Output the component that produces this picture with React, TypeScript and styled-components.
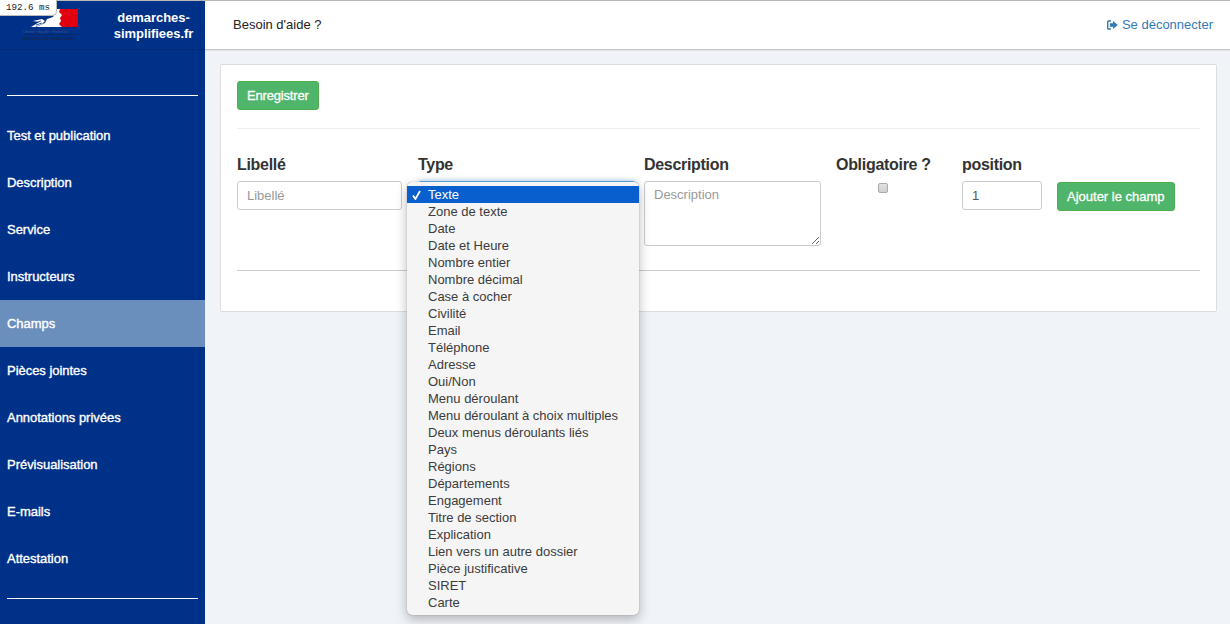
import React from "react";
import styled, { createGlobalStyle } from "styled-components";

const Global = createGlobalStyle`
  html, body { margin: 0; padding: 0; height: 100%; }
  body { background: #f0f3f8; font-family: "Liberation Sans", Arial, sans-serif; color: #333; overflow: hidden; }
  * { box-sizing: border-box; }
`;

const Page = styled.div`
  display: flex;
  width: 1230px;
  height: 624px;
  position: relative;
  overflow: hidden;
`;
const Timer = styled.div`
  position: absolute;
  top: 0;
  left: 0;
  width: 57px;
  height: 16px;
  padding: 3px 0 0 6px;
  background: #fff;
  border-right: 1px solid #bbb;
  border-bottom: 1px solid #bbb;
  border-bottom-right-radius: 5px;
  font: 9.2px/10px "Liberation Mono", monospace;
  color: #222;
  z-index: 5;
`;
const Sidebar = styled.aside`
  width: 205px;
  flex: none;
  background: #003189;
  display: flex;
  flex-direction: column;
`;
const Brand = styled.div`
  height: 50px;
  flex: none;
  display: flex;
  align-items: flex-start;
  border-bottom: 1px solid #002a75;
  border-top: 1px solid #b9b9b9;
`;
const Logo = styled.div`
  width: 110px;
  flex: none;
  padding: 7px 0 0 22px;
`;
const LogoMark = styled.svg`
  display: block;
  width: 57px;
  height: 34px;
`;
const BrandName = styled.div`
  width: 95px;
  padding-top: 9px;
  padding-right: 8px;
  text-align: center;
  font-size: 13px;
  line-height: 16px;
  font-weight: 700;
  letter-spacing: -0.05px;
  color: #fff;
`;
const Rule = styled.hr<{ $top?: number; $bottom?: number }>`
  border: 0;
  height: 1px;
  background: #fff;
  margin: ${(p) => p.$top ?? 0}px 7px ${(p) => p.$bottom ?? 0}px;
  flex: none;
`;
const Nav = styled.nav`
  display: flex;
  flex-direction: column;
`;
const NavItem = styled.a<{ $active?: boolean }>`
  display: flex;
  align-items: center;
  height: 47px;
  padding-left: 7px;
  font-size: 13px;
  letter-spacing: -0.03px;
  -webkit-text-stroke: 0.35px #fff;
  color: #fff;
  background: ${(p) => (p.$active ? "#6a8fbc" : "transparent")};
`;
const Main = styled.main`
  flex: 1;
  min-width: 0;
  display: flex;
  flex-direction: column;
`;
const Header = styled.header`
  height: 50px;
  flex: none;
  background: #fff;
  border-top: 1px solid #b9b9b9;
  border-bottom: 1px solid #c4c6c8;
  box-shadow: 0 1px 1px rgba(0, 0, 0, 0.06);
  display: flex;
  align-items: center;
  justify-content: space-between;
  padding: 0 17px 1px 28px;
  font-size: 13px;
  color: #222;
`;
const Logout = styled.a`
  display: flex;
  align-items: center;
  gap: 4px;
  font-size: 13px;
  color: #337ab7;
`;
const Card = styled.section`
  margin: 14px 13px 0 15px;
  height: 248px;
  background: #fff;
  border: 1px solid #ddd;
  border-radius: 2px;
  padding: 16px 16px 0;
`;
const Button = styled.button<{ $tight?: boolean }>`
  display: block;
  height: 29px;
  padding: 0 9px;
  background: #4fb56a;
  border: 1px solid #4cae4c;
  border-radius: 3px;
  color: #fff;
  font-family: inherit;
  font-size: 13px;
  letter-spacing: ${(p) => (p.$tight ? "-0.18px" : "0")};
  -webkit-text-stroke: 0.3px #fff;
  white-space: nowrap;
`;
const Divider = styled.hr<{ $color: string; $top: number }>`
  border: 0;
  height: 1px;
  margin: ${(p) => p.$top}px 0 0;
  background: ${(p) => p.$color};
`;
const FormRow = styled.div`
  display: flex;
  align-items: flex-start;
  margin-top: 26px;
  height: 115px;
`;
const Field = styled.div<{ $width: number }>`
  position: relative;
  width: ${(p) => p.$width}px;
  flex: none;
`;
const Label = styled.div`
  height: 17px;
  margin-bottom: 9px;
  font-size: 16px;
  line-height: 19px;
  font-weight: 700;
  letter-spacing: -0.3px;
  color: #333;
  white-space: nowrap;
`;
const Input = styled.input<{ $width: number }>`
  display: block;
  width: ${(p) => p.$width}px;
  height: 29px;
  padding: 0 9px;
  background: #fff;
  border: 1px solid #ccc;
  border-radius: 3px;
  font-family: inherit;
  font-size: 13px;
  color: #555;
  &::placeholder { color: #999; opacity: 1; }
`;
const TextArea = styled.textarea`
  display: block;
  width: 177px;
  height: 65px;
  padding: 5px 9px;
  border: 1px solid #ccc;
  border-radius: 3px;
  font-family: inherit;
  font-size: 13px;
  &::placeholder { color: #999; opacity: 1; }
`;
const Check = styled.input`
  appearance: none;
  display: block;
  width: 10px;
  height: 10px;
  margin: 11px 0 0 42px;
  background: linear-gradient(#e2e2e2, #cfcfcf);
  border: 1px solid #aaa;
  border-radius: 2px;
`;
const SelectBack = styled.div`
  width: 218px;
  height: 29px;
  border: 1px solid #66afe9;
  border-radius: 3px;
  box-shadow: 0 0 5px rgba(102, 175, 233, 0.6);
`;
const Menu = styled.ul`
  position: absolute;
  left: -11px;
  top: 27px;
  width: 232px;
  margin: 0;
  padding: 4px 0 4px;
  list-style: none;
  background: #f5f5f5;
  border-radius: 5px;
  box-shadow: 0 0 1px rgba(0, 0, 0, 0.45), 0 4px 12px rgba(0, 0, 0, 0.28);
  z-index: 3;
`;
const MenuItem = styled.li<{ $selected?: boolean }>`
  position: relative;
  height: 17px;
  padding-left: 21px;
  font-size: 13px;
  line-height: 17px;
  white-space: nowrap;
  color: ${(p) => (p.$selected ? "#fff" : "#3c3c3c")};
  background: ${(p) => (p.$selected ? "#0a5fce" : "transparent")};
`;
const Tick = styled.svg`
  position: absolute;
  left: 5px;
  top: 4px;
  width: 9px;
  height: 10px;
`;
const ButtonCell = styled.div`
  padding-top: 27px;
`;

const nav = ["Test et publication", "Description", "Service", "Instructeurs", "Champs", "Pièces jointes", "Annotations privées", "Prévisualisation", "E-mails", "Attestation"];
const types = ["Texte", "Zone de texte", "Date", "Date et Heure", "Nombre entier", "Nombre décimal", "Case à cocher", "Civilité", "Email", "Téléphone", "Adresse", "Oui/Non", "Menu déroulant", "Menu déroulant à choix multiples", "Deux menus déroulants liés", "Pays", "Régions", "Départements", "Engagement", "Titre de section", "Explication", "Lien vers un autre dossier", "Pièce justificative", "SIRET", "Carte"];

export default function App() {
  return (
    <Page>
      <Global />
      <Timer>192.6 ms</Timer>
      <Sidebar>
        <Brand>
          <Logo>
            <LogoMark viewBox="0 0 57 34">
              <rect x="35" y="1" width="21" height="18" fill="#e1000f" />
              <path d="M35 1 L38 1 L37 4 L40 7 L38 10 L39 13 L37 16 L40 19 L14 19 L23 15 L25 11 L31 9 L33 5 Z" fill="#fff" />
              <path d="M11 13 L20 11 L23 13 L20 16 L13 19 L9 19 L14 16 L17 14 Z" fill="#fff" />
              <path d="M13 15 L19 13 M14 17 L20 15" stroke="#003189" strokeWidth="0.8" />
              <rect x="1" y="26" width="55" height="0.7" fill="#14264f" />
              <text x="1" y="24.5" fontSize="3.7" fill="#3c5288" fontFamily="Liberation Sans">Liberté • Égalité • Fraternité</text>
              <text x="1" y="32" fontSize="4" fontWeight="700" fill="#14264f" fontFamily="Liberation Sans">RÉPUBLIQUE FRANÇAISE</text>
            </LogoMark>
          </Logo>
          <BrandName>demarches-<br />simplifiees.fr</BrandName>
        </Brand>
        <Rule $top={45} $bottom={16} />
        <Nav>
          {nav.map((n) => (
            <NavItem key={n} $active={n === "Champs"}>{n}</NavItem>
          ))}
        </Nav>
        <Rule $top={16} />
      </Sidebar>
      <Main>
        <Header>
          <span>Besoin d'aide ?</span>
          <Logout>
            <svg width="11" height="10" viewBox="0 0 11 10" fill="none">
              <path d="M4 1H1.5A.8.8 0 0 0 .7 1.8v6.4a.8.8 0 0 0 .8.8H4" stroke="#337ab7" strokeWidth="1.4" />
              <path d="M2.8 3.3H6V.9L10.8 5 6 9.1V6.7H2.8Z" fill="#337ab7" />
            </svg>
            Se déconnecter
          </Logout>
        </Header>
        <Card>
          <Button $tight>Enregistrer</Button>
          <Divider $color="#eee" $top={18} />
          <FormRow>
            <Field $width={181}>
              <Label>Libellé</Label>
              <Input $width={165} placeholder="Libellé" />
            </Field>
            <Field $width={226}>
              <Label>Type</Label>
              <SelectBack />
              <Menu>
                {types.map((t, i) => (
                  <MenuItem key={t} $selected={i === 0}>
                    {i === 0 && (
                      <Tick viewBox="0 0 9 10">
                        <path d="M1 5.5 L3.4 9 L8 1" stroke="#fff" strokeWidth="1.8" fill="none" />
                      </Tick>
                    )}
                    {t}
                  </MenuItem>
                ))}
              </Menu>
            </Field>
            <Field $width={192}>
              <Label>Description</Label>
              <TextArea placeholder="Description" />
            </Field>
            <Field $width={126}>
              <Label>Obligatoire ?</Label>
              <Check type="checkbox" />
            </Field>
            <Field $width={95}>
              <Label>position</Label>
              <Input $width={80} defaultValue="1" />
            </Field>
            <ButtonCell>
              <Button>Ajouter le champ</Button>
            </ButtonCell>
          </FormRow>
          <Divider $color="#ccc" $top={0} />
        </Card>
      </Main>
    </Page>
  );
}
